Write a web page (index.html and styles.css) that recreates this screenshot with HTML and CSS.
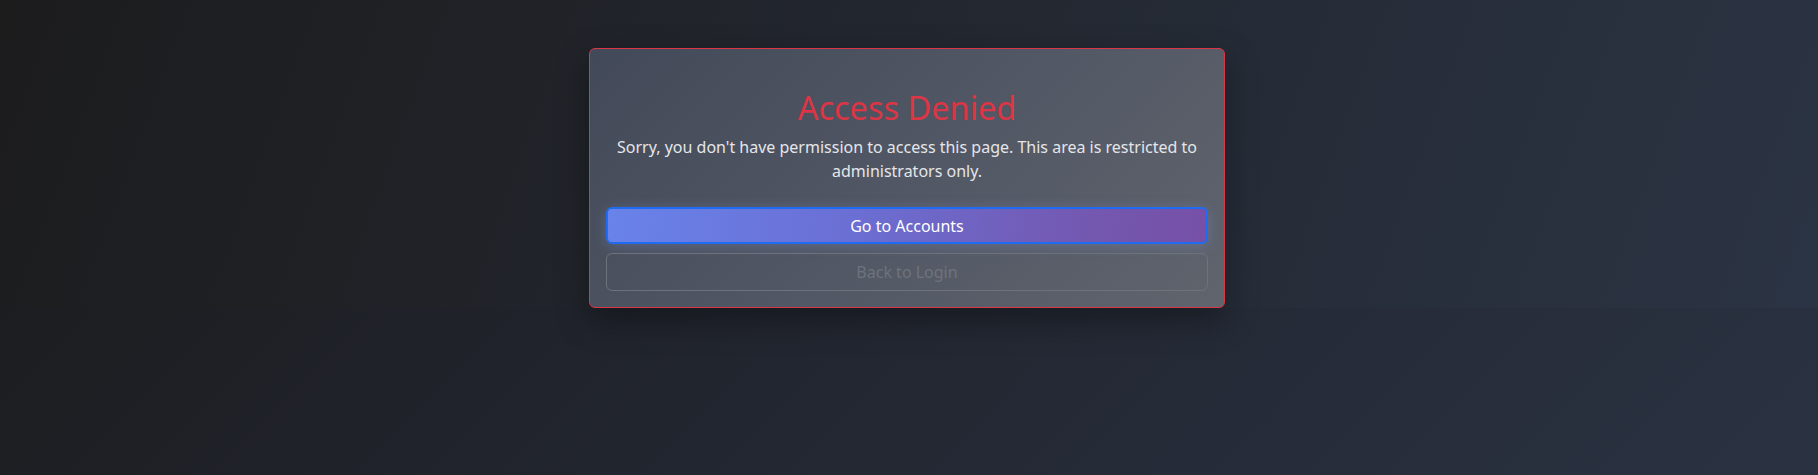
FILE: index.html
```html
<!DOCTYPE html>
<html lang="en">
<head>
<meta charset="utf-8">
<title>Access Denied</title>
<link rel="stylesheet" href="styles.css">
</head>
<body>
  <div class="page">
    <div class="card">
      <h1 class="title">Access Denied</h1>
      <p class="message">Sorry, you don't have permission to access this page. This area is restricted to administrators only.</p>
      <div class="actions">
        <button class="btn btn-primary" type="button">Go to Accounts</button>
        <button class="btn btn-outline" type="button">Back to Login</button>
      </div>
    </div>
  </div>
</body>
</html>
```

FILE: styles.css
```css
html {
  height: 100%;
  background: linear-gradient(135deg, #191a1a 0%, #222630 50%, #2a3242 100%);
}

body {
  margin: 0;
  min-height: 100%;
  font-family: "Noto Sans", "Open Sans", sans-serif;
  color: #e6e8ec;
}

.page {
  padding: 48px 4px 0 0;
  background: linear-gradient(110deg, #1c1c1d 0%, #22262e 45%, #2b3444 100%);
}

.card {
  width: 636px;
  box-sizing: border-box;
  margin: 0 auto;
  padding: 40px 16px 16px;
  border: 1px solid #dc3545;
  border-radius: 6px;
  background: linear-gradient(135deg, #424958 0%, #515764 50%, #60646d 100%);
  box-shadow: 0 12px 32px rgba(0, 0, 0, 0.35);
  text-align: center;
}

.title {
  margin: 0 0 8px;
  font-size: 32.5px;
  font-weight: 400;
  line-height: 38px;
  color: #dc3545;
}

.message {
  margin: 0 0 24px;
  font-size: 16px;
  line-height: 24px;
  color: #e4e6ea;
}

.actions {
  display: flex;
  flex-direction: column;
  gap: 9px;
}

.btn {
  display: block;
  width: 100%;
  height: 37px;
  box-sizing: border-box;
  padding: 0 12px;
  font-family: inherit;
  font-size: 16px;
  line-height: 24px;
  border-radius: 6px;
  text-align: center;
}

.btn-primary {
  border: 2px solid #1f6cf2;
  color: #ffffff;
  background: linear-gradient(100deg, #6883ea 0%, #6b6fd4 40%, #7458b0 80%, #7650a6 100%);
  box-shadow: 0 2px 14px rgba(140, 160, 240, 0.28);
}

.btn-outline {
  height: 38px;
  border: 1px solid #6d727b;
  color: #6e737c;
  background: transparent;
}
```
